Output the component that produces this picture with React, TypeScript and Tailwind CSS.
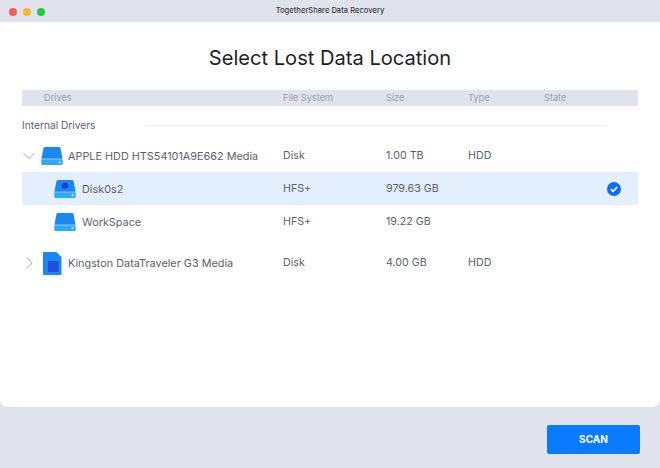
const font = { fontFamily: 'Inter, "Liberation Sans", sans-serif' };

function Hdd({ dot }: { dot?: boolean }) {
  return (
    <svg width="22" height="20" viewBox="0 0 23 20" className="shrink-0">
      <path d="M4.5 0.5H18.5Q20 0.5 20.4 2L22.6 13H0.4L2.6 2Q3 0.5 4.5 0.5Z" fill="#1a87f5" />
      <path d="M0.3 13.5H22.7V18Q22.7 19.5 21.2 19.5H1.8Q0.3 19.5 0.3 18Z" fill="#31a8fb" />
      {dot && <ellipse cx="11.5" cy="6.5" rx="3.6" ry="3" fill="#1a3fd0" />}
      <circle cx="19.5" cy="16.5" r="1" fill="#d8f0ff" />
    </svg>
  );
}

function Usb() {
  return (
    <svg width="19" height="23" viewBox="0 0 19 23" className="shrink-0">
      <path d="M1 0H13.5L18.5 5V22Q18.5 23 17.5 23H1Q0 23 0 22V1Q0 0 1 0Z" fill="#1a87f5" />
      <rect x="5" y="9" width="10.5" height="11" fill="#1f4fdc" />
    </svg>
  );
}

function Row({
  icon,
  name,
  fs,
  size,
  type,
  chevron,
  indent,
  selected,
  className,
}: {
  icon: React.ReactNode;
  name: string;
  fs: string;
  size: string;
  type?: string;
  chevron?: "down" | "right";
  indent?: boolean;
  selected?: boolean;
  className?: string;
}) {
  return (
    <div className={`flex items-center pt-px text-[10.7px] text-[#5c5f6b] ${selected ? "bg-[#e3effc]" : ""} ${className ?? ""}`}>
      <div className={`flex w-[261px] shrink-0 items-center ${indent ? "pl-[32px]" : ""}`}>
        {chevron && (
          <span className="flex w-[14px] shrink-0 justify-center">
            {chevron === "down" ? (
              <svg width="12" height="8" viewBox="0 0 12 8" fill="none" stroke="#a3a6ae" strokeWidth="1">
                <path d="M0.5 1L6 6.8L11.5 1" />
              </svg>
            ) : (
              <svg width="7" height="12" viewBox="0 0 7 12" fill="none" stroke="#a3a6ae" strokeWidth="1">
                <path d="M0.8 0.5L6.2 6L0.8 11.5" />
              </svg>
            )}
          </span>
        )}
        <span className={`flex w-[22px] shrink-0 justify-center ${indent ? "" : "ml-[5px]"}`}>{icon}</span>
        <span className={`whitespace-nowrap text-[10.85px] ${indent ? "ml-[6px]" : "ml-[5px]"}`}>{name}</span>
      </div>
      <span className="w-[103px] shrink-0">{fs}</span>
      <span className="w-[82px] shrink-0">{size}</span>
      <span className="w-[76px] shrink-0">{type}</span>
      <span className="flex flex-1 justify-end pr-[17px]">
        {selected && (
          <svg width="14" height="14" viewBox="0 0 14 14">
            <circle cx="7" cy="7" r="7" fill="#0b6ff0" />
            <path d="M3.8 7.2L6.1 9.4L10.3 5" fill="none" stroke="#fff" strokeWidth="1.6" />
          </svg>
        )}
      </span>
    </div>
  );
}

export default function App() {
  return (
    <div className="flex h-[468px] w-[660px] flex-col overflow-hidden bg-[#e1e3ec]" style={font}>
      <div className="relative flex h-[22px] shrink-0 items-center justify-center">
        <div className="absolute left-[9px] top-[8px] flex gap-[6px]">
          <span className="h-[8px] w-[8px] rounded-full bg-[#fb5c56]" />
          <span className="h-[8px] w-[8px] rounded-full bg-[#fcb92e]" />
          <span className="h-[8px] w-[8px] rounded-full bg-[#28c73f]" />
        </div>
        <span className="text-[7.6px] font-medium text-[#3a3c44]">TogetherShare Data Recovery</span>
      </div>

      <div className="flex h-[385px] shrink-0 flex-col rounded-b-[8px] bg-white px-[22px]">
        <h1 className="mt-[21px] h-[30px] text-center text-[20.1px] leading-[30px] text-[#1f2026]">
          Select Lost Data Location
        </h1>

        <div className="mt-[17px] flex h-[16px] items-center bg-[#e1e3ec] text-[9.2px] text-[#9a9eb0]">
          <span className="w-[261px] shrink-0 pl-[22px]">Drives</span>
          <span className="w-[103px] shrink-0">File System</span>
          <span className="w-[82px] shrink-0">Size</span>
          <span className="w-[76px] shrink-0">Type</span>
          <span>State</span>
        </div>

        <div className="mt-[13px] flex h-[14px] items-center">
          <span className="w-[123px] shrink-0 text-[10.2px] text-[#5c5f6b]">Internal Drivers</span>
          <span className="mr-[32px] h-px flex-1 -translate-y-px bg-[#f0f1f4]" />
        </div>

        <Row className="mt-[6px] h-[33px]" chevron="down" icon={<Hdd />} name="APPLE HDD HTS54101A9E662 Media" fs="Disk" size="1.00 TB" type="HDD" />
        <Row className="h-[33px]" indent selected icon={<Hdd dot />} name="Disk0s2" fs="HFS+" size="979.63 GB" />
        <Row className="h-[33px]" indent icon={<Hdd />} name="WorkSpace" fs="HFS+" size="19.22 GB" />
        <Row className="mt-[8px] h-[33px]" chevron="right" icon={<Usb />} name="Kingston DataTraveler G3 Media" fs="Disk" size="4.00 GB" type="HDD" />
      </div>

      <div className="flex flex-1 items-start justify-end pr-[20px] pt-[18px]">
        <button className="h-[29px] w-[93px] rounded-[2px] bg-[#0a7bff] text-[10px] font-bold text-white">SCAN</button>
      </div>
    </div>
  );
}
